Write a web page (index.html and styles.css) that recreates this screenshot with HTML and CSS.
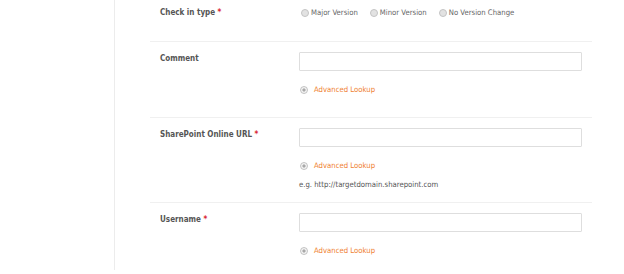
FILE: index.html
```html
<!DOCTYPE html>
<html>
<head>
<meta charset="utf-8">
<link rel="stylesheet" href="styles.css">
</head>
<body>
<div class="page">
  <div class="form">
    <div class="row first">
      <div class="label">Check in type <span class="req">*</span></div>
      <div class="field">
        <div class="radios">
          <label class="radio"><span class="dot"></span>Major Version</label>
          <label class="radio"><span class="dot"></span>Minor Version</label>
          <label class="radio"><span class="dot"></span>No Version Change</label>
        </div>
      </div>
    </div>
    <div class="row">
      <div class="label">Comment</div>
      <div class="field">
        <div class="input"></div>
        <div class="lookup"><span class="plus"><svg width="8" height="8" viewBox="0 0 8 8"><circle cx="4" cy="4" r="3.5" fill="#f4f4f4" stroke="#b5b5b5" stroke-width="0.8"/><path d="M4 2.2v3.6M2.2 4h3.6" stroke="#888" stroke-width="0.9"/></svg></span><span class="lk">Advanced Lookup</span></div>
      </div>
    </div>
    <div class="row">
      <div class="label">SharePoint Online URL <span class="req">*</span></div>
      <div class="field">
        <div class="input"></div>
        <div class="lookup"><span class="plus"><svg width="8" height="8" viewBox="0 0 8 8"><circle cx="4" cy="4" r="3.5" fill="#f4f4f4" stroke="#b5b5b5" stroke-width="0.8"/><path d="M4 2.2v3.6M2.2 4h3.6" stroke="#888" stroke-width="0.9"/></svg></span><span class="lk">Advanced Lookup</span></div>
        <div class="hint">e.g. http://targetdomain.sharepoint.com</div>
      </div>
    </div>
    <div class="row">
      <div class="label">Username <span class="req">*</span></div>
      <div class="field">
        <div class="input"></div>
        <div class="lookup"><span class="plus"><svg width="8" height="8" viewBox="0 0 8 8"><circle cx="4" cy="4" r="3.5" fill="#f4f4f4" stroke="#b5b5b5" stroke-width="0.8"/><path d="M4 2.2v3.6M2.2 4h3.6" stroke="#888" stroke-width="0.9"/></svg></span><span class="lk">Advanced Lookup</span></div>
      </div>
    </div>
  </div>
</div>
</body>
</html>
```
FILE: styles.css
```css
html, body {
  margin: 0;
  padding: 0;
  background: #fff;
}
body {
  font-family: "DejaVu Sans Condensed", "DejaVu Sans", sans-serif;
  font-size: 7.7px;
  color: #555;
  overflow: hidden;
}
.page {
  margin-left: 114px;
  border-left: 1px solid #ececec;
  height: 274px;
  padding-left: 35px;
}
.form {
  width: 442px;
  margin-top: -4px;
}
.row {
  display: flex;
  padding: 10px 10px 10px 10px;
  border-top: 1px solid #f0f0f0;
}
.row.first {
  border-top: none;
}
.label {
  width: 139px;
  flex: none;
  font-size: 8px;
  font-weight: bold;
  line-height: 14px;
  color: #555;
}
.req {
  color: #d9272e;
}
.field {
  flex: 1;
  display: flex;
  flex-direction: column;
}
.radios {
  display: flex;
  line-height: 14px;
  margin-bottom: 11px;
  color: #666;
}
.radio {
  display: flex;
  align-items: center;
  margin-right: 10px;
}
.dot {
  width: 6px;
  height: 6px;
  border-radius: 50%;
  border: 1px solid #c4c4c4;
  background: #e2e2e2;
  margin-left: 2px;
  margin-right: 2px;
}
.input {
  height: 17px;
  border: 1px solid #dedede;
  border-radius: 1px;
  background: #fff;
}
.lookup {
  display: flex;
  align-items: center;
  line-height: 14px;
  margin-top: 12px;
  margin-bottom: 10px;
}
.plus {
  display: flex;
  margin-left: 1px;
  margin-right: 6px;
}
.lk {
  color: #ef8233;
}
.hint {
  line-height: 14px;
  margin-top: -5px;
  color: #555;
}
```
